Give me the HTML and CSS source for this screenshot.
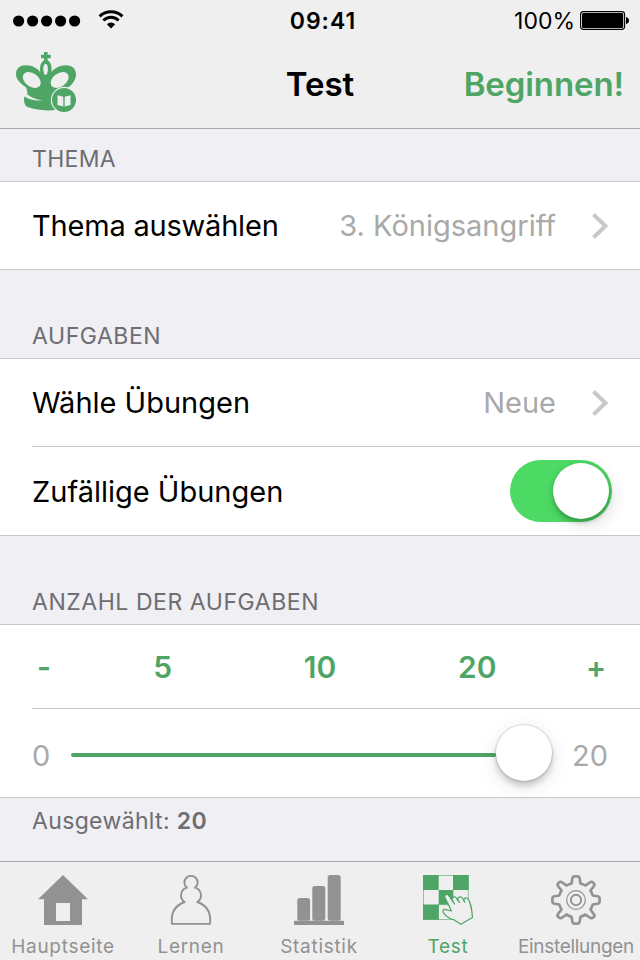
FILE: index.html
```html
<!DOCTYPE html>
<html lang="de">
<head>
    <meta charset="UTF-8">
    <meta name="viewport" content="width=device-width, initial-scale=1.0">
    <title>Test</title>
    <link rel="stylesheet" href="styles.css">
</head>
<body>
    <header class="header">
        <div class="status-bar">
            <div class="status-left">
                <svg class="signal" width="68" height="12" viewBox="0 0 68 12">
                    <circle cx="5.6" cy="6" r="5.6"/>
                    <circle cx="19.6" cy="6" r="5.6"/>
                    <circle cx="33.6" cy="6" r="5.6"/>
                    <circle cx="47.6" cy="6" r="5.6"/>
                    <circle cx="61.6" cy="6" r="5.6"/>
                </svg>
                <svg class="wifi" width="26" height="19" viewBox="0 0 26 19">
                    <path d="M1.600 6.400a16.500 16.500 0 0 1 22.800 0" fill="none" stroke="#000" stroke-width="3"/>
                    <path d="M5.400 10.400a10.800 10.800 0 0 1 15.200 0" fill="none" stroke="#000" stroke-width="2.800"/>
                    <path d="M8.800 14.200a6 6 0 0 1 8.400 0L13 18.600z"/>
                </svg>
            </div>
            <div class="clock">09:41</div>
            <div class="status-right">
                <span>100%</span>
                <svg class="battery" width="49" height="19" viewBox="0 0 49 19">
                    <rect x=".6" y=".6" width="44" height="17.8" rx="2.8" fill="none" stroke="#000" stroke-width="1.1"/>
                    <rect x="2" y="2" width="41.2" height="15" rx="1.5"/>
                    <path d="M46 6c4 .8 4 6.2 0 7z"/>
                </svg>
            </div>
        </div>
        <nav class="navbar">
            <svg class="logo" width="60" height="61" viewBox="0 0 60 61">
                <path fill="#4ea566" d="M28 0h3.600v2.800h3.100v3.500h-3.100v2C35 10.500 36 14 35.500 20 38.500 16 44 13.200 50 13.200c6.500 0 10 3.800 10 9.300 0 6-5 12-10.500 14.500V49l-10 9c-10 1.200-22-.4-29.500-3.700-2-3.300-2.800-7-1.200-10.500l2.500-1.500c.2-3-.5-5-1.300-7C4 31.500 0 27 0 22c0-5.500 4-8.800 10-8.800 6 0 11 2.800 14.200 6.800-.5-6 .6-9.500 3.800-11.700v-2h-3V2.800h3z"/>
                <g fill="#efefef">
                    <ellipse cx="29.600" cy="17.300" rx="2.300" ry="5.600"/>
                    <ellipse cx="15.800" cy="28" rx="10" ry="6.600" transform="rotate(35 15.800 28)"/>
                    <ellipse cx="43.600" cy="28" rx="10" ry="6.600" transform="rotate(-35 43.600 28)"/>
                    <path d="M8 43l3-.8c4.500 3.600 9 5.300 15.500 6.200-7 .7-13.500-.6-18-3.800z"/>
                    <circle cx="48" cy="48" r="13.200"/>
                </g>
                <circle cx="48" cy="48" r="12" fill="#4ea566"/>
                <path fill="#efefef" d="M41.500 43.200l5.800 1.500v9.700l-5.800-1.500zM54.500 43.200l-5.800 1.500v9.700l5.800-1.500z"/>
            </svg>
            <h1 class="title">Test</h1>
            <a class="start">Beginnen!</a>
        </nav>
    </header>

    <main class="content">
        <h2 class="section-title first">THEMA</h2>
        <div class="group">
            <div class="row">
                <span class="label theme">Thema auswählen</span>
                <span class="value">3. Königsangriff</span>
                <svg class="chevron" width="16" height="26" viewBox="0 0 16 26"><path d="M1.500 1.500L13.500 13l-12 11.500"/></svg>
            </div>
        </div>

        <h2 class="section-title">AUFGABEN</h2>
        <div class="group">
            <div class="row">
                <span class="label">Wähle Übungen</span>
                <span class="value">Neue</span>
                <svg class="chevron" width="16" height="26" viewBox="0 0 16 26"><path d="M1.500 1.500L13.500 13l-12 11.500"/></svg>
            </div>
            <div class="row random">
                <span class="label">Zufällige Übungen</span>
                <span class="switch"><span class="knob"></span></span>
            </div>
        </div>

        <h2 class="section-title">ANZAHL DER AUFGABEN</h2>
        <div class="group">
            <div class="steps">
                <span class="minus">-</span>
                <span>5</span>
                <span>10</span>
                <span>20</span>
                <span class="plus">+</span>
            </div>
            <div class="row slider-row">
                <span class="limit">0</span>
                <div class="slider">
                    <div class="track"></div>
                    <div class="thumb"></div>
                </div>
                <span class="limit">20</span>
            </div>
        </div>
        <p class="selected">Ausgewählt: <b>20</b></p>
    </main>

    <footer class="tabbar">
        <a class="tab">
            <svg width="50" height="50" viewBox="0 0 50 50">
                <path fill="#929292" fill-rule="evenodd" d="M25 0l25 24.300h-6V50H6V24.300H0zM18 28v18h14V28z"/>
            </svg>
            <span>Hauptseite</span>
        </a>
        <a class="tab">
            <svg width="50" height="50" viewBox="0 0 50 50">
                <path fill="none" stroke="#929292" stroke-width="1.900" stroke-linejoin="round" d="M21 12.700a6.600 6.600 0 1 1 8 0A7.900 7.900 0 0 1 31.300 27C40 30 45.500 36 44 48.900H6C4.500 36 10 30 18.700 27A7.900 7.900 0 0 1 21 12.700z"/>
            </svg>
            <span>Lernen</span>
        </a>
        <a class="tab">
            <svg width="50" height="50" viewBox="0 0 50 50" fill="#929292">
                <rect x="3.300" y="23" width="12.800" height="22.700" rx="2.500"/>
                <rect x="18.300" y="11" width="13" height="34.700" rx="2.500"/>
                <rect x="33.700" y="0" width="13" height="45.700" rx="2.500"/>
                <rect x="0" y="45.700" width="50" height="4.300" rx=".6"/>
            </svg>
            <span>Statistik</span>
        </a>
        <a class="tab active">
            <svg width="50" height="50" viewBox="0 0 50 50">
                <rect x=".5" y=".5" width="44.800" height="44" fill="none" stroke="#4ea566" stroke-opacity=".6"/>
                <path fill="#4ea566" d="M0 0h15.700v15H0zM30 0h15.700v15H30zM15.700 15H30v14.500H15.700zM0 29.500h15.700v15.200H0z"/>
                <path stroke="#4ea566" stroke-opacity=".6" d="M30 15v15M15.500 29.500v15M15 29.700h15"/>
                <path fill="#efefef" stroke="#4ea566" stroke-width="1.200" stroke-linejoin="round" d="M28.500 36L22 22.500c-1-2.500 2.200-4.300 3.700-2L31.500 29l-2.300-4.200c-.5-2.800 3-4 4.300-1.500l2.800 4.200-1.500-3.200c0-2.600 3.500-3.500 4.800-1l2.100 4-.8-2.500c.3-2.200 3-2.800 4.400-.5 2.900 4.500 3.200 8.500 4.200 18.200L37.800 49.300 31 44.800c-4-.8-7.500-3.300-10.500-7-1.500-2 .3-3.900 2.500-3.200z"/>
            </svg>
            <span>Test</span>
        </a>
        <a class="tab">
            <svg width="50" height="50" viewBox="0 0 50 50" fill="none" stroke="#929292">
                <path stroke-width="2.700" stroke-linejoin="round" d="M21.500 2.500Q22 1.400 23.500 1.400h3Q28 1.400 28.500 2.500L29.500 8.500Q32 9.200 34.500 10.500L39.500 7Q41 6.500 42 7.500L43 8.500Q44 9.800 43 11L39.500 15.500Q41 18 41.700 20.500L47.500 21.500Q48.600 22 48.600 23.500v3Q48.600 28 47.500 28.500L41.700 29.500Q41 32 39.500 34.500L43 39.500Q44 40.500 43 41.700L42 42.700Q41 43.500 39.500 43L34.500 39.500Q32 41 29.500 41.700L28.500 47.500Q28 48.600 26.500 48.600h-3Q22 48.600 21.500 47.500L20.500 41.700Q18 41 15.500 39.500L10.500 43Q9 43.500 8 42.500L7 41.500Q6 40.500 7 39L10.500 34.500Q9 32 8.300 29.500L2.500 28.500Q1.400 28 1.400 26.500v-3Q1.400 22 2.500 21.500L8.300 20.500Q9 18 10.500 15.500L7 11Q6 9.500 7 8.500L8 7.500Q9 6.500 10.500 7L15.500 10.500Q18 9.200 20.500 8.500z"/>
                <circle cx="25" cy="25" r="9.300" stroke-width="1.200"/>
                <circle cx="25" cy="25" r="5.200" stroke-width="1.900"/>
            </svg>
            <span class="settings">Einstellungen</span>
        </a>
    </footer>
</body>
</html>
```

FILE: styles.css
```css
* {
    box-sizing: border-box;
}

body {
    font-family: 'Inter', 'Liberation Sans', sans-serif;
    margin: 0;
    height: 960px;
    display: flex;
    flex-direction: column;
    color: #000;
    background-color: #efeff4;
    overflow: hidden;
}

.header {
    height: 129px;
    background-color: #efefef;
    border-bottom: 1px solid #a8a8a8;
}

.status-bar {
    display: grid;
    grid-template-columns: 1fr auto 1fr;
    align-items: center;
    height: 41px;
    padding: 0 11px 0 13px;
    font-size: 23px;
}

.status-left,
.status-right {
    display: flex;
    align-items: center;
}

.status-right {
    justify-content: flex-end;
    gap: 5px;
}

.wifi {
    margin-left: 17px;
    margin-top: -2px;
}

.clock {
    padding-left: 4px;
    font-weight: 600;
    letter-spacing: 1px;
}

.navbar {
    display: grid;
    grid-template-columns: 1fr auto 1fr;
    align-items: center;
    height: 85px;
    padding: 0 16px;
}

.logo {
    margin-top: -2px;
}

.title {
    margin: 0;
    font-size: 33px;
    font-weight: 600;
}

.start {
    justify-self: end;
    font-size: 33px;
    font-weight: 600;
    letter-spacing: -0.1px;
    color: #4ea566;
}

.content {
    flex: 1;
}

.section-title {
    display: flex;
    align-items: flex-end;
    height: 88px;
    margin: 0;
    padding: 0 32px 8px;
    font-size: 23px;
    line-height: 28px;
    font-weight: 400;
    letter-spacing: 0.55px;
    color: #6d6d72;
}

.section-title.first {
    height: 52px;
    letter-spacing: 0.3px;
}

.group {
    background-color: #fff;
    border-top: 1px solid #c8c7cc;
    border-bottom: 1px solid #c8c7cc;
}

.row {
    display: flex;
    align-items: center;
    height: 87px;
    padding: 0 32px;
    font-size: 29px;
}

.theme {
    letter-spacing: -0.2px;
}

.random {
    height: 89px;
    margin-left: 32px;
    padding: 0 28px 0 0;
    border-top: 1px solid #c8c7cc;
}

.value {
    margin-left: auto;
    color: #a9a9a9;
}

.chevron {
    margin-left: 36px;
    fill: none;
    stroke: #c7c7cc;
    stroke-width: 4;
}

.switch {
    display: flex;
    justify-content: flex-end;
    width: 102px;
    height: 62px;
    margin-left: auto;
    padding: 3px;
    border-radius: 31px;
    background-color: #4cd964;
}

.knob {
    width: 56px;
    height: 56px;
    border-radius: 50%;
    background-color: #fff;
    box-shadow: 0 3px 5px rgba(0,0,0,0.25), 4px 6px 16px rgba(0,0,0,0.12);
}

.steps {
    display: grid;
    grid-template-columns: 52px repeat(3, 1fr) 52px;
    align-items: center;
    height: 84px;
    margin-left: 32px;
    padding-right: 32px;
    border-bottom: 1px solid #c8c7cc;
    font-size: 30px;
    font-weight: 600;
    text-align: center;
    color: #4ea566;
}

.minus {
    padding-right: 28px;
}

.plus {
    padding-left: 28px;
}

.slider-row {
    height: 88px;
    padding-top: 4px;
}

.limit {
    color: #a9a9a9;
}

.slider {
    display: flex;
    align-items: center;
    flex: 1;
    margin: 0 20px 0 21px;
}

.track {
    flex: 1;
    height: 4px;
    border-radius: 2px;
    background-color: #4ea566;
}

.thumb {
    width: 56px;
    height: 56px;
    margin-top: -4px;
    border-radius: 50%;
    background-color: #fff;
    box-shadow: 0 0 1px 1px rgba(0,0,0,0.12), 0 5px 6px rgba(0,0,0,0.18), 0 5px 22px rgba(0,0,0,0.1);
}

.selected {
    margin: 0;
    padding: 9px 32px 0;
    font-size: 23px;
    line-height: 28px;
    letter-spacing: 0.35px;
    color: #6d6d72;
}

.selected b {
    font-weight: 600;
}

.tabbar {
    display: flex;
    height: 99px;
    background-color: #efefef;
    border-top: 1px solid #a7a7ac;
}

.tab {
    display: flex;
    flex-direction: column;
    align-items: center;
    width: 128px;
    padding-top: 13px;
    padding-right: 2px;
    font-size: 19px;
    line-height: 22px;
    color: #929292;
    letter-spacing: 0.7px;
    white-space: nowrap;
}

.tab span {
    margin-top: 11px;
}

.tab.active {
    padding-right: 0;
    color: #4ea566;
}

.tab:last-child {
    padding-right: 0;
}

.tab .settings {
    letter-spacing: -0.3px;
}
```
